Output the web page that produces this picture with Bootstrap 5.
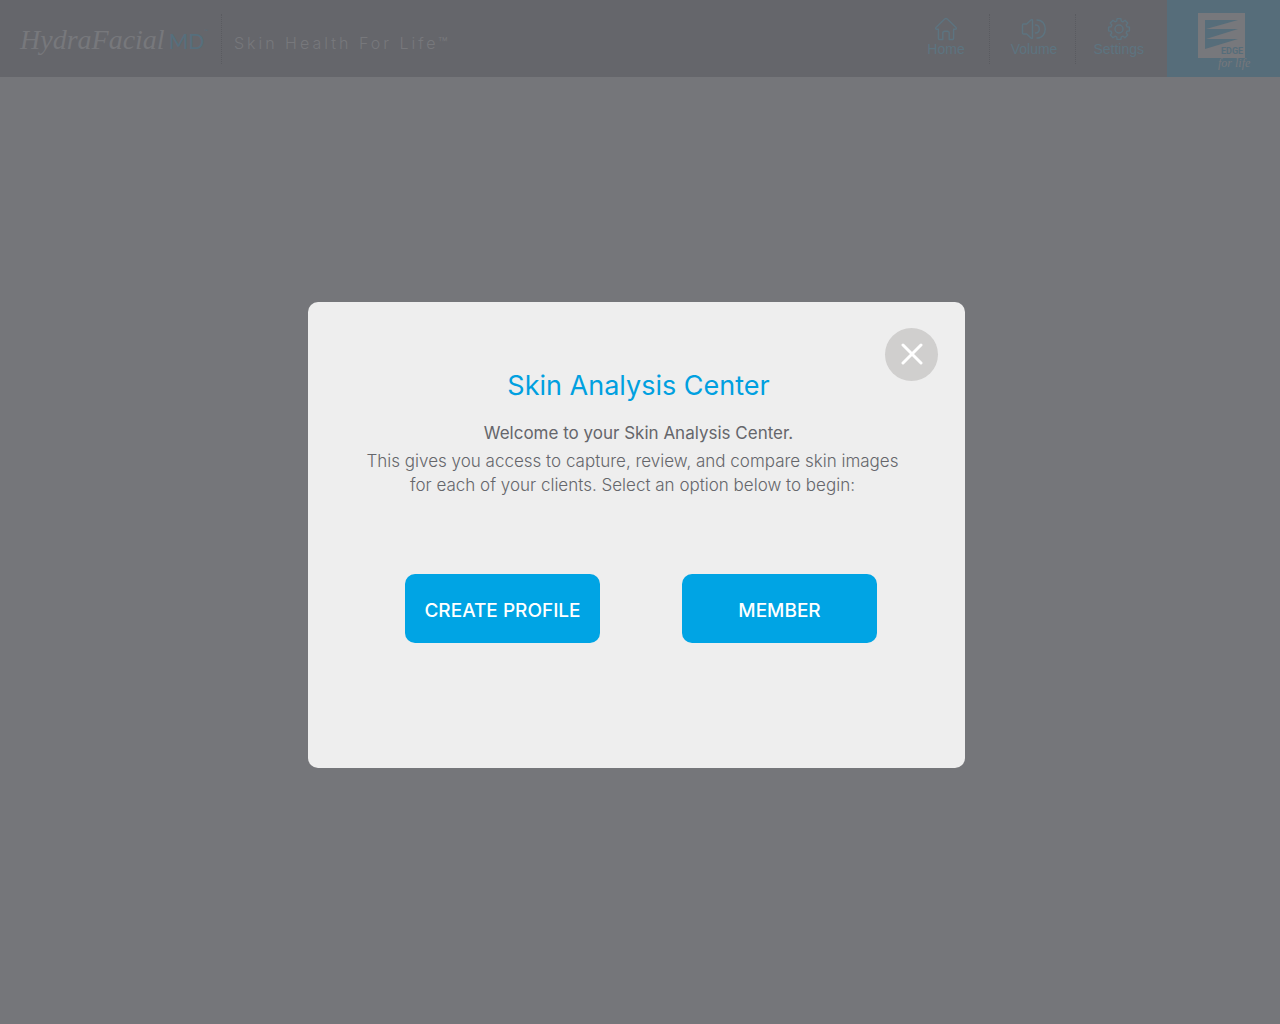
<!DOCTYPE html>
<html lang="en">
<head>
<meta charset="utf-8">
<meta name="viewport" content="width=device-width, initial-scale=1">
<title>Skin Analysis Center</title>
<link rel="stylesheet" href="https://cdn.jsdelivr.net/npm/bootstrap@5.3.0/dist/css/bootstrap.min.css">
<style>
body { background: #75767a; font-family: Inter, "Liberation Sans", sans-serif; color: #65666b; }
.topbar { background: #65666b; height: 77px; }
.brand { font-family: "Liberation Serif", serif; font-style: italic; font-size: 28px; line-height: 40px; color: #77787c; padding: 4px 13px 0 20px; }
.brand-md { font-family: Lato, sans-serif; font-style: normal; font-size: 21px; color: #566f7d; }
.brand-md sup { font-size: 5px; top: -16px; }
.tagline { font-size: 16px; line-height: 20px; letter-spacing: 3px; color: #77787c; font-weight: 300; }
.rule { height: 50px; border-left: 1px dotted #5a5b60; }
.tool { font-family: "Liberation Sans", sans-serif; font-size: 14px; line-height: 16px; color: #5d7480; }
.tool:hover { color: #5d7480; }
.tool-volume { padding-left: 21px; padding-right: 18px; }
.tool-settings { padding-left: 17px; padding-right: 23px; }
.edge { background: #566d7a; width: 113px; }
.dialog-card { width: 657px; background: #eee; border-radius: 10px; padding: 68px 54px 125px; }
.dialog-title { font-size: 27px; line-height: 32px; color: #00a0e0; }
.welcome { font-size: 17px; line-height: 24px; margin-top: 19px; }
.intro { font-size: 17px; line-height: 24px; font-weight: 300; }
.action { width: 195px; height: 69px; border-radius: 10px; background: #00a4e4; color: #fff; font-size: 19px; font-weight: 500; padding: 5px 0 0; }
.action:hover { background: #0095d0; color: #fff; }
.actions { gap: 82px; margin-top: 77px; padding-left: 9px; }
.dismiss { top: 26px; right: 27px; width: 53px; height: 53px; background: #d0cfce; }
main { padding: 225px 7px 0 0; }
</style>
</head>
<body>
<header class="topbar d-flex align-items-stretch">
  <div class="d-flex align-items-center">
    <a href="#" class="brand text-decoration-none text-nowrap">HydraFacial<span class="brand-md ms-1">MD<sup>™</sup></span></a>
    <div class="rule"></div>
    <div class="tagline ps-2 ms-1 pt-2 text-nowrap">Skin Health For Life™</div>
  </div>
  <nav class="d-flex align-items-center ms-auto" aria-label="Main">
    <a href="#" class="tool text-decoration-none d-flex flex-column align-items-center px-4 pb-1">
      <svg width="24" height="24" viewBox="0 0 24 24" fill="none" stroke="currentColor" stroke-width="1.4" stroke-linejoin="round" aria-hidden="true"><path d="M10.700 2 2 10.600c-.7.8-.2 1.700.7 1.700h1.700v9.200q0 1 1 1h3.400v-6.200q0-2 2-2h2.400q2 0 2 2v6.200h3.400q1 0 1-1v-9.200h1.700c.9 0 1.400-.9.7-1.700L13.300 2q-1.300-1.100-2.600 0Z"/></svg>
      <span>Home</span></a>
    <div class="rule"></div>
    <a href="#" class="tool tool-volume text-decoration-none d-flex flex-column align-items-center pb-1">
      <svg width="26" height="24" viewBox="0 0 26 24" fill="none" stroke="currentColor" stroke-width="1.4" stroke-linejoin="round" stroke-linecap="round" aria-hidden="true"><path d="M2.500 7h3.200l4.500-4.200q1.300-.7 1.300.7v17q0 1.400-1.300.7L5.700 17H2.500q-1 0-1-1V8q0-1 1-1ZM14.500 8c5 0 5 8 0 8M16 3c11 0 11 18 0 18"/></svg>
      <span>Volume</span></a>
    <div class="rule"></div>
    <a href="#" class="tool tool-settings text-decoration-none d-flex flex-column align-items-center pb-1">
      <svg width="24" height="24" viewBox="0 0 24 24" fill="none" stroke="currentColor" stroke-width="1.4" stroke-linejoin="round" aria-hidden="true"><path d="M10.100 1.600h3.800l.4 2.500 1.700.7 2-1.500 2.700 2.700-1.500 2 .7 1.700 2.500.4v3.800l-2.500.4-.7 1.700 1.500 2-2.700 2.700-2-1.500-1.700.7-.4 2.500h-3.800l-.4-2.500-1.700-.7-2 1.500-2.700-2.700 1.500-2-.7-1.700-2.500-.4v-3.800l2.500-.4.7-1.700-1.500-2 2.700-2.700 2 1.500 1.700-.7Z"/><circle cx="12" cy="12" r="4"/></svg>
      <span>Settings</span></a>
  </nav>
  <a href="#" class="edge d-flex justify-content-center" aria-label="Edge for life">
    <svg width="60" height="76" viewBox="0 0 60 76" aria-hidden="true">
      <path d="M4 13h47v45H4Z" fill="#77787c"/>
      <path d="M11 20h33L12 29h32L12 39h32L11 49Z" fill="#566d7a"/>
      <text x="27" y="54" font-family="Roboto, sans-serif" font-size="9" font-weight="700" fill="#566d7a">EDGE</text>
      <text x="24" y="67" font-family="Liberation Serif, serif" font-size="12" font-style="italic" fill="#77787c">for life</text>
    </svg>
  </a>
</header>
<main class="d-flex justify-content-center">
  <section class="dialog-card position-relative text-center" role="dialog" aria-labelledby="dialog-title">
    <button type="button" class="dismiss btn p-0 border-0 rounded-circle position-absolute d-flex align-items-center justify-content-center" aria-label="Close">
      <svg width="24" height="24" viewBox="0 0 24 24" stroke="#fff" stroke-width="3" stroke-linecap="round" aria-hidden="true"><path d="m3 2 18 18M21 2 3 20"/></svg>
    </button>
    <h1 id="dialog-title" class="dialog-title fw-normal mb-0 ps-1">Skin Analysis Center</h1>
    <p class="welcome mb-0 ps-1">Welcome to your Skin Analysis Center.</p>
    <p class="intro mb-0 mt-1 pe-2 text-nowrap">This gives you access to capture, review, and compare skin images<br>for each of your clients. Select an option below to begin:</p>
    <div class="actions d-flex justify-content-center">
      <button type="button" class="action btn border-0">CREATE PROFILE</button>
      <button type="button" class="action btn border-0">MEMBER</button>
    </div>
  </section>
</main>
<script src="https://cdn.jsdelivr.net/npm/bootstrap@5.3.0/dist/js/bootstrap.bundle.min.js"></script>
</body>
</html>
